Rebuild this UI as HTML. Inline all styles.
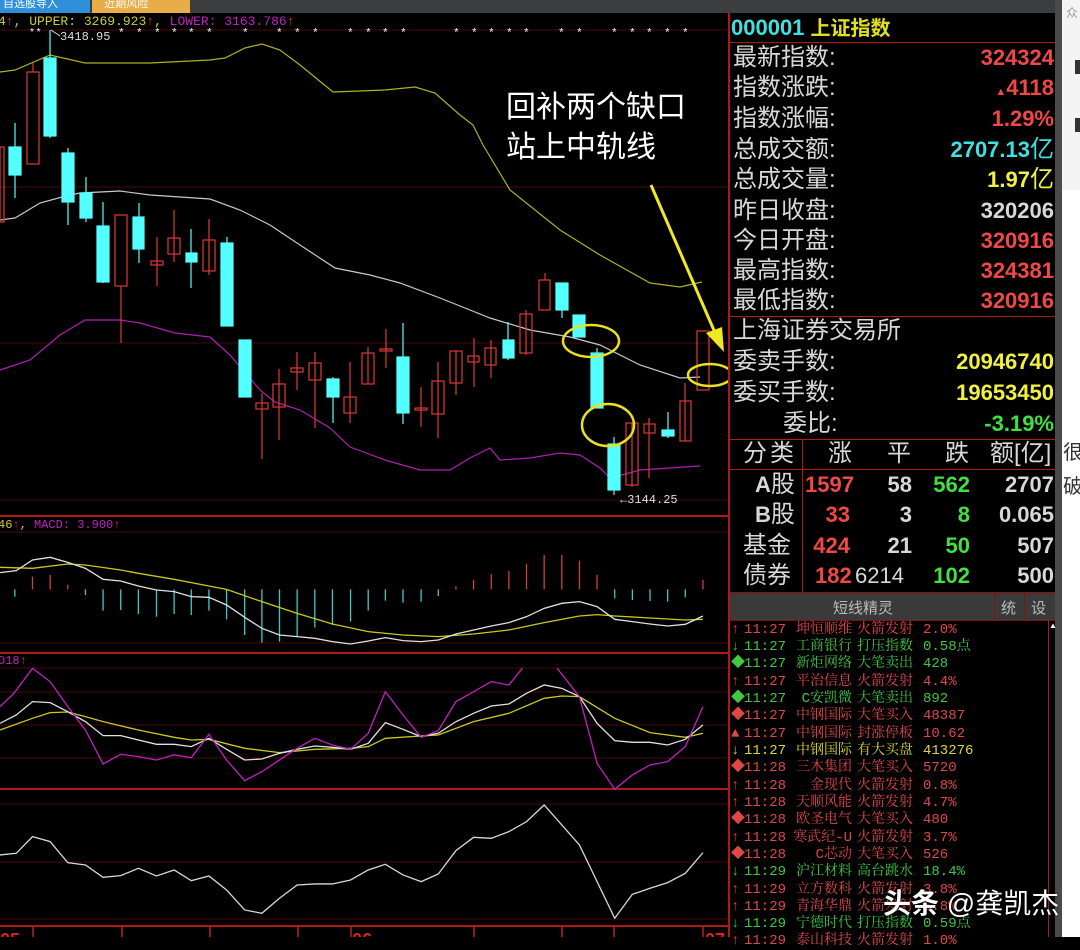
<!DOCTYPE html>
<html><head><meta charset="utf-8"><style>
body{margin:0;width:1080px;height:937px;overflow:hidden;background:#000;position:relative;font-family:"Liberation Sans","Noto Sans CJK SC",sans-serif}
.a{position:absolute;white-space:nowrap}
.lb{font-size:24px;color:#d8d8d8;left:733px;line-height:30px}
.v{font-size:22px;font-weight:bold;right:26px;line-height:30px;letter-spacing:0px}
.li{position:absolute;left:731px;width:316px;height:17px;font-size:14px;font-family:"Liberation Mono","Noto Serif CJK SC",serif;line-height:17px;white-space:pre}
.li span{position:absolute;top:0}
.li .t{left:13px}.li .n{left:59px;width:62px;text-align:right}.li .e{left:126px}.li .x{left:192px}
</style></head><body>
<div class="a" style="left:0;top:0;width:1058px;height:13px;background:#3c3d3f"></div>
<div class="a" style="left:0;top:0;width:90px;height:13px;background:#2f8fd8;color:#fff;font-size:11px;line-height:8px;overflow:hidden">&nbsp;自选股导入</div>
<div class="a" style="left:92px;top:0;width:98px;height:13px;background:#e8ac48;color:#fff;font-size:11px;line-height:8px;overflow:hidden">&nbsp;&nbsp;&nbsp;&nbsp;近期风险</div>
<div class="a" style="left:1055px;top:0;width:7px;height:937px;background:#4a4a4a"></div>
<div class="a" style="left:1062px;top:0;width:18px;height:937px;background:#f4f4f4"></div>
<div class="a" style="left:1062px;top:190px;width:18px;height:747px;background:#fff"></div>
<div class="a" style="left:1063px;top:436px;font-size:20px;color:#333">很</div>
<div class="a" style="left:1063px;top:470px;font-size:20px;color:#333">破</div>
<div class="a" style="left:1066px;top:4px;font-size:12px;color:#999">众</div>
<div class="a" style="left:1075px;top:60px;width:5px;height:14px;background:#333"></div>
<div class="a" style="left:1075px;top:118px;width:5px;height:14px;background:#333"></div>

<svg class="a" style="left:0;top:13px" width="728" height="924" viewBox="0 13 728 924">
<g stroke="#4a0808" stroke-width="1">
<line x1="0" y1="30" x2="728" y2="30"/><line x1="0" y1="187" x2="728" y2="187"/><line x1="0" y1="343" x2="728" y2="343"/><line x1="0" y1="500" x2="728" y2="500"/>
<line x1="0" y1="532" x2="728" y2="532"/><line x1="0" y1="643" x2="728" y2="643"/>
<line x1="0" y1="668" x2="728" y2="668"/><line x1="0" y1="692" x2="728" y2="692"/><line x1="0" y1="725" x2="728" y2="725"/><line x1="0" y1="758" x2="728" y2="758"/>
<line x1="0" y1="804" x2="728" y2="804"/><line x1="0" y1="862" x2="728" y2="862"/><line x1="0" y1="919" x2="728" y2="919"/>
</g>
<g stroke="#b01818" stroke-width="2"><line x1="0" y1="516" x2="728" y2="516"/><line x1="0" y1="653" x2="728" y2="653"/><line x1="0" y1="789" x2="728" y2="789"/><line x1="0" y1="926" x2="728" y2="926"/></g>
<text x="-2" y="25" font-family="Liberation Mono,monospace" font-size="13" fill="#cccc30">4<tspan fill="#e03030">↑</tspan>, UPPER: 3269.923<tspan fill="#e03030">↑</tspan>, <tspan fill="#c020c0">LOWER: 3163.786</tspan><tspan fill="#e03030">↑</tspan></text>
<g fill="#fff" font-size="10"><text x="30" y="35">* *</text></g>
<text x="60" y="40" font-family="Liberation Mono,monospace" font-size="12" fill="#ddd">3418.95</text>
<line x1="51" y1="30" x2="60" y2="36" stroke="#ddd"/>
<g fill="#fff" font-family="Liberation Mono,monospace" font-size="11"><text x="118" y="36">*</text><text x="136" y="36">*</text><text x="154" y="36">*</text><text x="171" y="36">*</text><text x="188" y="36">*</text><text x="206" y="36">*</text><text x="242" y="36">*</text><text x="276" y="36">*</text><text x="294" y="36">*</text><text x="312" y="36">*</text><text x="347" y="36">*</text><text x="365" y="36">*</text><text x="382" y="36">*</text><text x="400" y="36">*</text><text x="453" y="36">*</text><text x="471" y="36">*</text><text x="488" y="36">*</text><text x="506" y="36">*</text><text x="523" y="36">*</text><text x="558" y="36">*</text><text x="576" y="36">*</text><text x="611" y="36">*</text><text x="629" y="36">*</text><text x="646" y="36">*</text><text x="664" y="36">*</text><text x="682" y="36">*</text></g>
<g fill="none" stroke-width="1.2">
<polyline stroke="#b0b020" points="0,72 15,70 50,55 85,63 150,63 210,60 225,58 245,48 262,44 280,50 300,65 333,92 385,90 415,87 435,93 460,115 473,125 483,145 510,190 560,230 600,255 650,283 680,287 702,282"/>
<polyline stroke="#c8c8c8" points="0,220 15,218 40,203 62,197 80,193 120,191 150,195 210,199 240,210 270,225 300,245 335,268 370,275 400,283 440,298 470,310 490,318 530,330 570,337 600,345 640,365 680,378 700,377"/>
<polyline stroke="#b020b0" points="0,370 30,360 60,335 85,320 120,320 140,323 175,333 210,337 230,355 260,390 275,402 300,410 330,428 350,447 385,460 420,470 450,470 470,458 490,448 500,460 530,458 560,453 580,455 600,468 610,478 640,470 700,466"/>
</g>
<g stroke-width="1.2">
<g stroke="#e03838" fill="none">
<rect x="0" y="147" width="4" height="75"/>
<line x1="33" y1="63" x2="33" y2="72"/><rect x="27" y="72" width="12" height="92"/>
<line x1="121" y1="286" x2="121" y2="343"/><rect x="115" y="215" width="12" height="71"/>
<line x1="157" y1="237" x2="157" y2="286"/><rect x="151" y="261" width="12" height="4"/>
<line x1="174" y1="210" x2="174" y2="262"/><rect x="168" y="238" width="12" height="16"/>
<line x1="209" y1="219" x2="209" y2="275"/><rect x="203" y="240" width="12" height="31"/>
<line x1="262" y1="393" x2="262" y2="459"/><rect x="256" y="403" width="12" height="6"/>
<line x1="279" y1="369" x2="279" y2="440"/><rect x="273" y="384" width="12" height="23"/>
<line x1="297" y1="352" x2="297" y2="390"/><rect x="291" y="368" width="12" height="4"/>
<line x1="315" y1="352" x2="315" y2="428"/><rect x="309" y="363" width="12" height="17"/>
<line x1="350" y1="362" x2="350" y2="423"/><rect x="344" y="397" width="12" height="16"/>
<line x1="368" y1="347" x2="368" y2="384"/><rect x="362" y="353" width="12" height="31"/>
<line x1="386" y1="329" x2="386" y2="368"/><rect x="380" y="349" width="12" height="2"/>
<line x1="421" y1="387" x2="421" y2="427"/><rect x="415" y="408" width="12" height="2"/>
<line x1="438" y1="362" x2="438" y2="438"/><rect x="432" y="381" width="12" height="33"/>
<line x1="456" y1="351" x2="456" y2="395"/><rect x="450" y="351" width="12" height="32"/>
<line x1="474" y1="338" x2="474" y2="387"/><rect x="468" y="356" width="11" height="6"/>
<line x1="491" y1="340" x2="491" y2="378"/><rect x="485" y="348" width="11" height="17"/>
<line x1="526" y1="310" x2="526" y2="355"/><rect x="520" y="314" width="12" height="39"/>
<line x1="545" y1="273" x2="545" y2="280"/><rect x="539" y="280" width="11" height="30"/>
<line x1="632" y1="423" x2="632" y2="487"/><rect x="626" y="423" width="12" height="62"/>
<line x1="649" y1="418" x2="649" y2="478"/><rect x="644" y="424" width="11" height="9"/>
<line x1="685" y1="383" x2="685" y2="441"/><rect x="680" y="401" width="11" height="40"/>
<rect x="697" y="331" width="12" height="59"/>
</g>
<g stroke="#54ffff" fill="#54ffff">
<line x1="15" y1="123" x2="15" y2="198"/><rect x="9" y="147" width="12" height="28"/>
<line x1="50" y1="30" x2="50" y2="138"/><rect x="44" y="58" width="12" height="78"/>
<line x1="68" y1="148" x2="68" y2="225"/><rect x="62" y="153" width="12" height="49"/>
<line x1="86" y1="177" x2="86" y2="222"/><rect x="80" y="193" width="12" height="25"/>
<line x1="103" y1="202" x2="103" y2="283"/><rect x="97" y="226" width="12" height="56"/>
<line x1="139" y1="203" x2="139" y2="263"/><rect x="133" y="217" width="11" height="32"/>
<line x1="191" y1="229" x2="191" y2="288"/><rect x="186" y="253" width="11" height="9"/>
<line x1="227" y1="237" x2="227" y2="326"/><rect x="221" y="243" width="12" height="83"/>
<rect x="239" y="340" width="12" height="57"/>
<line x1="333" y1="377" x2="333" y2="423"/><rect x="327" y="379" width="12" height="18"/>
<line x1="403" y1="323" x2="403" y2="424"/><rect x="397" y="357" width="12" height="56"/>
<line x1="508" y1="322" x2="508" y2="360"/><rect x="503" y="340" width="11" height="18"/>
<line x1="562" y1="283" x2="562" y2="318"/><rect x="556" y="283" width="12" height="27"/>
<rect x="573" y="315" width="12" height="22"/>
<line x1="597" y1="348" x2="597" y2="408"/><rect x="591" y="353" width="12" height="55"/>
<line x1="614" y1="437" x2="614" y2="495"/><rect x="608" y="444" width="12" height="46"/>
<line x1="668" y1="412" x2="668" y2="438"/><rect x="662" y="430" width="12" height="6"/>
</g>
</g>
<text x="620" y="503" font-family="Liberation Mono,monospace" font-size="12" fill="#ddd">←3144.25</text>
<g fill="none" stroke="#e8e020" stroke-width="2.5">
<ellipse cx="591" cy="341" rx="28" ry="16"/><ellipse cx="608" cy="425" rx="26" ry="21"/><ellipse cx="710" cy="375" rx="22" ry="11"/>
</g>
<line x1="651" y1="185" x2="716" y2="335" stroke="#f0e820" stroke-width="3"/>
<polygon points="724,352 706,333 722,327" fill="#f0e820"/>
<text x="506" y="117" font-size="30" fill="#fff" font-family="Noto Sans CJK SC,sans-serif">回补两个缺口</text>
<text x="506" y="157" font-size="30" fill="#fff" font-family="Noto Sans CJK SC,sans-serif">站上中轨线</text>
<text x="-2" y="528" font-family="Liberation Mono,monospace" font-size="12" fill="#cccc30">46<tspan fill="#e03030">↑</tspan>, <tspan fill="#c020c0">MACD: 3.900</tspan><tspan fill="#e03030">↑</tspan></text>
<text x="-2" y="664" font-family="Liberation Mono,monospace" font-size="12" fill="#c020c0">D18<tspan fill="#e03030">↑</tspan></text>
<g transform="translate(0,500) scale(0.4643,0.3333)">
<path vector-effect="non-scaling-stroke" stroke-width="1.3" stroke="#40c8c8" d="M32 268V290M184 268V285M222 268V332M260 268V330M298 268V342M337 268V350M375 268V342M412 268V345M450 268V332M488 268V358M527 268V405M564 268V428M602 268V425M640 268V408M678 268V383M716 268V375M755 268V365M793 268V332M830 268V302M868 268V308M907 268V305M944 268V288M1324 268V295M1362 268V300M1400 268V303M1438 268V305M1476 268V292"/>
<path vector-effect="non-scaling-stroke" stroke-width="1.3" stroke="#d04040" d="M70 268V230M108 268V225M146 268V255M982 268V258M1020 268V240M1058 268V222M1096 268V213M1134 268V192M1172 268V165M1210 268V165M1248 268V182M1286 268V225M1514 268V240"/>
<g fill="none">
<polyline vector-effect="non-scaling-stroke" stroke-width="1.3" stroke="#c8c820" points="0,202 70,205 146,192 184,195 260,210 298,220 375,238 450,258 488,268 564,305 640,340 716,372 793,395 868,405 944,410 1020,402 1096,390 1172,368 1248,348 1286,344 1324,348 1400,354 1476,360 1514,358"/>
<polyline vector-effect="non-scaling-stroke" stroke-width="1.3" stroke="#e0e0e0" points="0,218 35,212 70,180 108,172 146,187 184,205 222,238 260,243 298,258 337,270 375,275 412,290 450,292 488,315 527,352 564,385 602,405 640,410 678,415 716,425 755,432 793,423 830,413 868,422 907,425 944,420 982,402 1020,390 1058,378 1096,368 1134,350 1172,325 1210,310 1248,305 1286,320 1324,358 1362,365 1400,372 1438,378 1476,373 1514,348"/>
<polyline vector-effect="non-scaling-stroke" stroke-width="1.3" stroke="#c8c820" points="0,690 70,655 108,638 146,636 184,650 222,665 298,690 375,712 412,720 450,718 527,745 602,758 678,748 755,745 793,740 830,715 907,708 944,705 1020,665 1096,640 1172,595 1210,588 1248,590 1324,655 1400,698 1476,712 1514,700"/>
<polyline vector-effect="non-scaling-stroke" stroke-width="1.3" stroke="#e0e0e0" points="0,670 35,645 70,605 108,608 146,635 184,665 222,707 260,707 298,720 337,733 375,733 412,740 450,715 488,748 527,780 564,777 602,760 640,748 678,738 716,742 755,748 793,730 830,668 868,688 907,710 944,700 982,665 1020,640 1058,618 1096,612 1134,580 1172,555 1210,565 1248,590 1286,670 1324,722 1362,727 1400,727 1438,735 1476,718 1514,675"/>
<polyline vector-effect="non-scaling-stroke" stroke-width="1.3" stroke="#c020c0" points="0,620 30,580 70,505 108,545 146,620 184,690 222,792 260,763 298,770 337,780 375,765 412,773 450,703 488,780 527,842 564,815 602,780 640,745 678,715 716,735 755,748 793,700 830,575 868,645 907,712 944,692 982,605 1020,575 1058,545 1096,555 1125,505"/>
<polyline vector-effect="non-scaling-stroke" stroke-width="1.3" stroke="#c020c0" points="1200,505 1248,590 1286,790 1324,868 1362,825 1400,795 1438,785 1476,740 1514,620"/>
<polyline vector-effect="non-scaling-stroke" stroke-width="1.3" stroke="#d8d8d8" points="0,1065 35,1060 70,1010 108,1025 146,1088 184,1095 222,1132 260,1127 298,1105 337,1128 375,1110 412,1142 450,1128 488,1170 527,1230 564,1240 602,1195 640,1155 678,1152 716,1152 755,1140 793,1110 830,1093 868,1125 907,1145 944,1122 982,1052 1020,1012 1058,1015 1096,995 1134,965 1172,915 1210,975 1248,1035 1286,1145 1324,1255 1362,1183 1400,1165 1438,1148 1476,1120 1514,1058"/>
</g>
</g>
<g stroke="#c02020" stroke-width="1.5"><line x1="33" y1="926" x2="33" y2="937"/><line x1="122" y1="926" x2="122" y2="937"/><line x1="210" y1="926" x2="210" y2="937"/><line x1="298" y1="926" x2="298" y2="937"/><line x1="351" y1="926" x2="351" y2="937"/><line x1="474" y1="926" x2="474" y2="937"/><line x1="562" y1="926" x2="562" y2="937"/><line x1="614" y1="926" x2="614" y2="937"/><line x1="703" y1="926" x2="703" y2="937"/></g>
<g fill="#e02020" font-size="18" font-weight="bold"><text x="0" y="946">05</text><text x="352" y="946">06</text><text x="705" y="946">07</text></g>
</svg>

<div class="a" style="left:728px;top:13px;width:2px;height:924px;background:#b01818"></div>
<div class="a" style="left:730px;top:42px;width:325px;height:1px;background:#b01818"></div>
<div class="a" style="left:730px;top:316px;width:325px;height:1px;background:#b01818"></div>
<div class="a" style="left:730px;top:439px;width:325px;height:1px;background:#b01818"></div>
<div class="a" style="left:730px;top:469px;width:325px;height:1px;background:#b01818"></div>
<div class="a" style="left:802px;top:439px;width:1px;height:153px;background:#b01818"></div>
<div class="a" style="left:731px;top:13px;font-size:22px;font-weight:bold;color:#40e0e0;line-height:30px">000001 <span style="color:#e0e020;font-size:20px">上证指数</span></div>
<div class="a lb" style="top:43px">最新指数:</div><div class="a v" style="top:43px;color:#f04848">324324</div>
<div class="a lb" style="top:73px">指数涨跌:</div><div class="a v" style="top:73px;color:#f04848"><span style="font-size:11px">▲</span>4118</div>
<div class="a lb" style="top:104px">指数涨幅:</div><div class="a v" style="top:104px;color:#f04848">1.29%</div>
<div class="a lb" style="top:135px">总成交额:</div><div class="a v" style="top:135px;color:#40e0e0">2707.13<span style="font-weight:normal;font-size:24px">亿</span></div>
<div class="a lb" style="top:165px">总成交量:</div><div class="a v" style="top:165px;color:#f0f040">1.97<span style="font-weight:normal;font-size:24px">亿</span></div>
<div class="a lb" style="top:196px">昨日收盘:</div><div class="a v" style="top:196px;color:#d8d8d8">320206</div>
<div class="a lb" style="top:226px">今日开盘:</div><div class="a v" style="top:226px;color:#f04848">320916</div>
<div class="a lb" style="top:256px">最高指数:</div><div class="a v" style="top:256px;color:#f04848">324381</div>
<div class="a lb" style="top:286px">最低指数:</div><div class="a v" style="top:286px;color:#f04848">320916</div>
<div class="a lb" style="top:316px">上海证券交易所</div>
<div class="a lb" style="top:347px">委卖手数:</div><div class="a v" style="top:347px;color:#f0f040">20946740</div>
<div class="a lb" style="top:378px">委买手数:</div><div class="a v" style="top:378px;color:#f0f040">19653450</div>
<div class="a lb" style="top:409px;left:783px">委比:</div><div class="a v" style="top:409px;color:#40e040">-3.19%</div>
<div class="a lb" style="top:439px;left:743px;letter-spacing:3px">分类</div>
<div class="a lb" style="top:439px;left:828px">涨</div><div class="a lb" style="top:439px;left:887px">平</div><div class="a lb" style="top:439px;left:945px">跌</div><div class="a lb" style="top:439px;left:990px">额[亿]</div>
<div class="a lb" style="top:470px;left:755px"><b style="font-size:22px">A</b>股</div>
<div class="a lb" style="top:500px;left:755px"><b style="font-size:22px">B</b>股</div>
<div class="a lb" style="top:531px;left:743px">基金</div>
<div class="a lb" style="top:561px;left:743px">债券</div>
<div class="a v" style="top:470px;right:226px;color:#f04848">1597</div><div class="a v" style="top:470px;right:168px;color:#d8d8d8">58</div><div class="a v" style="top:470px;right:110px;color:#40e040">562</div><div class="a v" style="top:470px;color:#d8d8d8">2707</div>
<div class="a v" style="top:500px;right:230px;color:#f04848">33</div><div class="a v" style="top:500px;right:168px;color:#d8d8d8">3</div><div class="a v" style="top:500px;right:110px;color:#40e040">8</div><div class="a v" style="top:500px;color:#d8d8d8">0.065</div>
<div class="a v" style="top:531px;right:230px;color:#f04848">424</div><div class="a v" style="top:531px;right:168px;color:#d8d8d8">21</div><div class="a v" style="top:531px;right:110px;color:#40e040">50</div><div class="a v" style="top:531px;color:#d8d8d8">507</div>
<div class="a v" style="top:561px;left:815px;color:#f04848">182</div><div class="a v" style="top:561px;left:855px;color:#d8d8d8;font-weight:normal">6214</div><div class="a v" style="top:561px;right:110px;color:#40e040">102</div><div class="a v" style="top:561px;color:#d8d8d8">500</div>
<div class="a" style="left:730px;top:592px;width:325px;height:27px;background:#3a3a3a;border-top:1px solid #8a1010;border-bottom:1px solid #8a1010"></div>
<div class="a" style="left:833px;top:597px;font-size:15px;color:#bbb">短线精灵</div>
<div class="a" style="left:994px;top:593px;width:1px;height:27px;background:#8a1010"></div>
<div class="a" style="left:1024px;top:593px;width:1px;height:27px;background:#8a1010"></div>
<div class="a" style="left:1001px;top:597px;font-size:15px;color:#bbb">统</div>
<div class="a" style="left:1031px;top:597px;font-size:15px;color:#bbb">设</div>
<div class="a" style="left:1048px;top:620px;width:1px;height:317px;background:#b01818"></div>
<div class="a" style="left:1049px;top:621px;font-size:8px;color:#fff">▲</div>
<div class="li" style="top:622px;color:#e04848">↑<span class="t">11:27</span><span class="n">坤恒顺维</span><span class="e">火箭发射</span><span class="x">2.0%</span></div>
<div class="li" style="top:639px;color:#40c840">↓<span class="t">11:27</span><span class="n">工商银行</span><span class="e">打压指数</span><span class="x">0.58点</span></div>
<div class="li" style="top:656px;color:#40c840">◆<span class="t">11:27</span><span class="n">新炬网络</span><span class="e">大笔卖出</span><span class="x">428</span></div>
<div class="li" style="top:674px;color:#e04848">↑<span class="t">11:27</span><span class="n">平治信息</span><span class="e">火箭发射</span><span class="x">4.4%</span></div>
<div class="li" style="top:691px;color:#40c840">◆<span class="t">11:27</span><span class="n">C安凯微</span><span class="e">大笔卖出</span><span class="x">892</span></div>
<div class="li" style="top:708px;color:#e04848">◆<span class="t">11:27</span><span class="n">中钢国际</span><span class="e">大笔买入</span><span class="x">48387</span></div>
<div class="li" style="top:726px;color:#e04848">▲<span class="t">11:27</span><span class="n">中钢国际</span><span class="e">封涨停板</span><span class="x">10.62</span></div>
<div class="li" style="top:743px;color:#d8d830">↓<span class="t">11:27</span><span class="n">中钢国际</span><span class="e">有大买盘</span><span class="x">413276</span></div>
<div class="li" style="top:760px;color:#e04848">◆<span class="t">11:28</span><span class="n">三木集团</span><span class="e">大笔买入</span><span class="x">5720</span></div>
<div class="li" style="top:778px;color:#e04848">↑<span class="t">11:28</span><span class="n">金现代</span><span class="e">火箭发射</span><span class="x">0.8%</span></div>
<div class="li" style="top:795px;color:#e04848">↑<span class="t">11:28</span><span class="n">天顺风能</span><span class="e">火箭发射</span><span class="x">4.7%</span></div>
<div class="li" style="top:812px;color:#e04848">◆<span class="t">11:28</span><span class="n">欧圣电气</span><span class="e">大笔买入</span><span class="x">480</span></div>
<div class="li" style="top:830px;color:#e04848">↑<span class="t">11:28</span><span class="n">寒武纪-U</span><span class="e">火箭发射</span><span class="x">3.7%</span></div>
<div class="li" style="top:847px;color:#e04848">◆<span class="t">11:28</span><span class="n">C芯动</span><span class="e">大笔买入</span><span class="x">526</span></div>
<div class="li" style="top:864px;color:#40c840">↓<span class="t">11:29</span><span class="n">沪江材料</span><span class="e">高台跳水</span><span class="x">18.4%</span></div>
<div class="li" style="top:882px;color:#e04848">↑<span class="t">11:29</span><span class="n">立方数科</span><span class="e">火箭发射</span><span class="x">3.8%</span></div>
<div class="li" style="top:899px;color:#e04848">↑<span class="t">11:29</span><span class="n">青海华鼎</span><span class="e">火箭发射</span><span class="x">5.8%</span></div>
<div class="li" style="top:916px;color:#40c840">↓<span class="t">11:29</span><span class="n">宁德时代</span><span class="e">打压指数</span><span class="x">0.59点</span></div>
<div class="li" style="top:933px;color:#e04848">↑<span class="t">11:29</span><span class="n">泰山科技</span><span class="e">火箭发射</span><span class="x">1.0%</span></div>
<div class="a" style="left:883px;top:882px;font-size:28px;color:#fff;font-weight:bold;text-shadow:0 0 2px #000">头条 <span style="font-weight:normal">@龚凯杰</span></div>
</body></html>
